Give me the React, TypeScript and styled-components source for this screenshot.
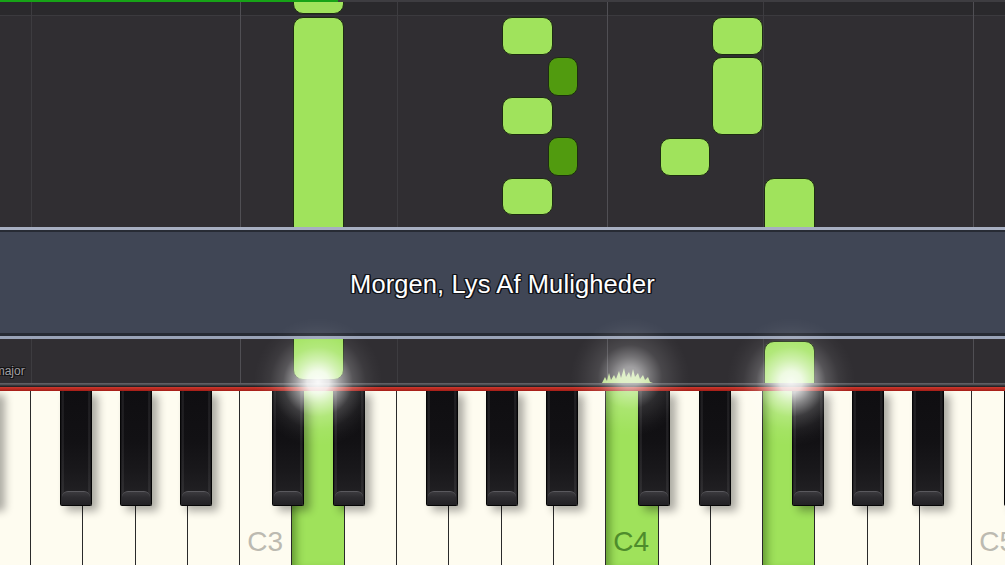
import React from "react";
import styled, { createGlobalStyle } from "styled-components";

const KEY_W = 52.3;
const KEY_START = -21.3;

const GlobalStyle = createGlobalStyle`
  html, body { margin: 0; padding: 0; background: #302e32; }
  body { font-family: "Liberation Sans", Arial, sans-serif; overflow: hidden; }
  #root { width: 1005px; height: 565px; }
`;

const Screen = styled.div`
  width: 1005px;
  height: 565px;
  overflow: hidden;
  display: flex;
  flex-direction: column;
  background: #302e32;
`;

const RollPane = styled.div<{ $h: number }>`
  position: relative;
  flex: 0 0 ${(p) => p.$h}px;
  overflow: hidden;
  background: #302e32;
`;

const HeaderStrip = styled.div`
  height: 15px;
  background: #2a292c;
  border-bottom: 1px solid #3b3a3e;
`;

const Progress = styled.div`
  position: absolute;
  top: 0;
  left: 0;
  right: 0;
  height: 2px;
  background: #3e3d41;
  z-index: 3;
  & > div {
    height: 100%;
    background: #17a317;
  }
`;

const GridLine = styled.div<{ $bright?: boolean }>`
  position: absolute;
  top: 0;
  bottom: 0;
  width: 1px;
  background: ${(p) => (p.$bright ? "#504f54" : "#3d3c40")};
`;

const Note = styled.div<{ $dark?: boolean }>`
  position: absolute;
  box-sizing: border-box;
  border-radius: 10px;
  border: 1.5px solid #1d2c12;
  background: ${(p) => (p.$dark ? "#519b0f" : "#a0e35c")};
  z-index: 1;
`;

const Banner = styled.div`
  flex: 0 0 112px;
  box-sizing: border-box;
  border-top: 3px solid #a7afc2;
  border-bottom: 3px solid #9aa3b7;
  background: #404655;
  box-shadow: inset 0 2px 0 #272b34, inset 0 -3px 0 #272b34;
  display: flex;
  align-items: center;
  justify-content: center;
  position: relative;
  z-index: 4;
`;

const Title = styled.span`
  color: #ffffff;
  font-family: "Liberation Sans", Arial, sans-serif;
  font-size: 25.5px;
  margin-top: 2px;
  letter-spacing: 0.1px;
  text-shadow: 1.2px 1.2px 0 #121419, -1.2px -1.2px 0 #121419, 1.2px -1.2px 0 #121419,
    -1.2px 1.2px 0 #121419, 0 1.4px 0 #121419, 0 -1.4px 0 #121419, 1.4px 0 0 #121419,
    -1.4px 0 0 #121419;
`;

const Stage = styled.div`
  position: relative;
  display: flex;
  flex-direction: column;
  flex: 1 1 auto;
`;

const ScaleLabel = styled.span`
  position: absolute;
  left: -16px;
  top: 25px;
  font-size: 12px;
  color: #a09fa3;
  text-shadow: 1px 1px 0 #111, -1px -1px 0 #111, 1px -1px 0 #111, -1px 1px 0 #111;
  white-space: nowrap;
  z-index: 2;
`;

const Rail = styled.div`
  flex: 0 0 8px;
  background: linear-gradient(
    180deg,
    #66656a 0,
    #4a494d 2px,
    #242326 3px,
    #242326 4.5px,
    #c8362b 4.5px,
    #a41d17 8px
  );
`;

const Keyboard = styled.div`
  position: relative;
  flex: 0 0 174px;
  overflow: hidden;
`;

const WhiteRow = styled.div`
  display: flex;
  height: 100%;
  margin-left: ${KEY_START}px;
`;

const WhiteKey = styled.div<{ $pressed?: boolean }>`
  flex: 0 0 ${KEY_W}px;
  box-sizing: border-box;
  height: 100%;
  border-right: 1.5px solid #2a2a2a;
  background: ${(p) => (p.$pressed ? "#9fe25b" : "#fefcf0")};
  box-shadow: ${(p) =>
    p.$pressed ? "inset 10px 0 9px -6px rgba(40, 80, 10, 0.5)" : "none"};
  display: flex;
  flex-direction: column;
  justify-content: flex-end;
  padding: 0 0 9px 7px;
`;

const KeyLabel = styled.span<{ $pressed?: boolean }>`
  font-family: "Liberation Sans", Arial, sans-serif;
  font-size: 28px;
  line-height: 28px;
  color: ${(p) => (p.$pressed ? "#4e8c2c" : "#bcbab1")};
`;

const BlackKey = styled.div`
  position: absolute;
  top: -1px;
  width: 32px;
  height: 116px;
  box-sizing: border-box;
  border: 1.5px solid #050506;
  border-top: none;
  border-radius: 0 0 2px 2px;
  background: linear-gradient(
      90deg,
      transparent 0,
      rgba(255, 255, 255, 0.09) 2px,
      transparent 3.5px,
      transparent calc(100% - 3.5px),
      rgba(255, 255, 255, 0.09) calc(100% - 2px),
      transparent 100%
    ),
    linear-gradient(180deg, #0f0e11 0%, #121114 45%, #19181b 70%, #222124 92%);
  box-shadow: 6px 5px 9px rgba(0, 0, 0, 0.33);
  z-index: 1;
`;

const KeyBevel = styled.div`
  position: absolute;
  left: 1px;
  right: 1px;
  bottom: 0;
  height: 13px;
  border-radius: 6px 6px 0 0;
  border-top: 1px solid #5a595e;
  background: linear-gradient(180deg, #3b3a3e 0, #2d2c30 40%, #222125 100%);
`;

const Glow = styled.div<{ $size: number; $strength: number }>`
  position: absolute;
  width: ${(p) => p.$size}px;
  height: ${(p) => p.$size}px;
  margin-left: ${(p) => -p.$size / 2}px;
  margin-top: ${(p) => -p.$size / 2}px;
  border-radius: 50%;
  pointer-events: none;
  z-index: 5;
  background: radial-gradient(
    circle,
    rgba(255, 255, 255, ${(p) => p.$strength}) 0,
    rgba(255, 255, 255, ${(p) => p.$strength * 0.9}) 12%,
    rgba(255, 255, 255, ${(p) => p.$strength * 0.55}) 24%,
    rgba(255, 255, 255, ${(p) => p.$strength * 0.2}) 38%,
    rgba(255, 255, 255, 0.06) 52%,
    rgba(255, 255, 255, 0.02) 62%,
    rgba(255, 255, 255, 0) 70%
  );
`;

const Sparkle = styled.svg`
  position: absolute;
  left: 602px;
  top: 27px;
  z-index: 4;
`;

type NoteData = { x: number; y: number; w: number; h: number; dark?: boolean };

const topNotes: NoteData[] = [
  { x: 293, y: -12, w: 51, h: 26 },
  { x: 293, y: 17, w: 51, h: 230 },
  { x: 502, y: 17, w: 51, h: 38 },
  { x: 548, y: 57, w: 30, h: 39, dark: true },
  { x: 502, y: 97, w: 51, h: 38 },
  { x: 548, y: 137, w: 30, h: 39, dark: true },
  { x: 502, y: 178, w: 51, h: 37 },
  { x: 660, y: 138, w: 50, h: 38 },
  { x: 712, y: 17, w: 51, h: 38 },
  { x: 712, y: 57, w: 51, h: 78 },
  { x: 764, y: 178, w: 51, h: 70 },
];

const lowNotes: NoteData[] = [
  { x: 293, y: -20, w: 51, h: 61 },
  { x: 764, y: 2, w: 51, h: 60 },
];

const gridLines = [
  { x: 31, bright: false },
  { x: 240, bright: true },
  { x: 397, bright: false },
  { x: 607, bright: true },
  { x: 763, bright: false },
  { x: 973, bright: true },
];

const whiteNames = [
  "E2", "F2", "G2", "A2", "B2", "C3", "D3", "E3", "F3", "G3", "A3",
  "B3", "C4", "D4", "E4", "F4", "G4", "A4", "B4", "C5", "D5",
];
const pressed = new Set(["D3", "C4", "F4"]);

const blackOffsets: Record<string, number> = {
  C: -20.5,
  D: -12,
  F: -23.5,
  G: -16,
  A: -8.3,
};

const blackKeys: number[] = [KEY_START - 12];
whiteNames.forEach((n, i) => {
  const off = blackOffsets[n[0]];
  if (off !== undefined) {
    blackKeys.push(KEY_START + (i + 1) * KEY_W + off);
  }
});

const renderNotes = (list: NoteData[]) =>
  list.map((n, i) => (
    <Note
      key={i}
      $dark={n.dark}
      style={{ left: n.x, top: n.y, width: n.w, height: n.h }}
    />
  ));

const renderGrid = () =>
  gridLines.map((g) => (
    <GridLine key={g.x} $bright={g.bright} style={{ left: g.x }} />
  ));

export default function App() {
  return (
    <>
      <GlobalStyle />
      <Screen>
        <RollPane $h={227}>
          <HeaderStrip />
          {renderGrid()}
          {renderNotes(topNotes)}
          <Progress>
            <div style={{ width: 338 }} />
          </Progress>
        </RollPane>
        <Banner>
          <Title>Morgen, Lys Af Muligheder</Title>
        </Banner>
        <Stage>
          <RollPane $h={44}>
            {renderGrid()}
            {renderNotes(lowNotes)}
            <ScaleLabel>F major</ScaleLabel>
          </RollPane>
          <Rail />
          <Keyboard>
            <WhiteRow>
              {whiteNames.map((n) => (
                <WhiteKey key={n} $pressed={pressed.has(n)}>
                  {n.startsWith("C") && (
                    <KeyLabel $pressed={pressed.has(n)}>{n}</KeyLabel>
                  )}
                </WhiteKey>
              ))}
            </WhiteRow>
            {blackKeys.map((x) => (
              <BlackKey key={x} style={{ left: x }}>
                <KeyBevel />
              </BlackKey>
            ))}
          </Keyboard>
          <Glow $size={130} $strength={0.97} style={{ left: 318, top: 43 }} />
          <Glow $size={120} $strength={0.6} style={{ left: 630, top: 38 }} />
          <Glow $size={130} $strength={0.92} style={{ left: 791, top: 43 }} />
          <Sparkle width="52" height="18" viewBox="0 0 52 18">
            <polygon
              points="0,17 3,11 5,15 7,7 9,14 12,9 14,13 17,5 19,12 22,2 24,11 27,6 29,12 31,3 33,11 36,7 38,13 41,9 43,14 46,11 48,16 51,17"
              fill="#c6f28c"
              opacity="0.9"
            />
          </Sparkle>
        </Stage>
      </Screen>
    </>
  );
}
